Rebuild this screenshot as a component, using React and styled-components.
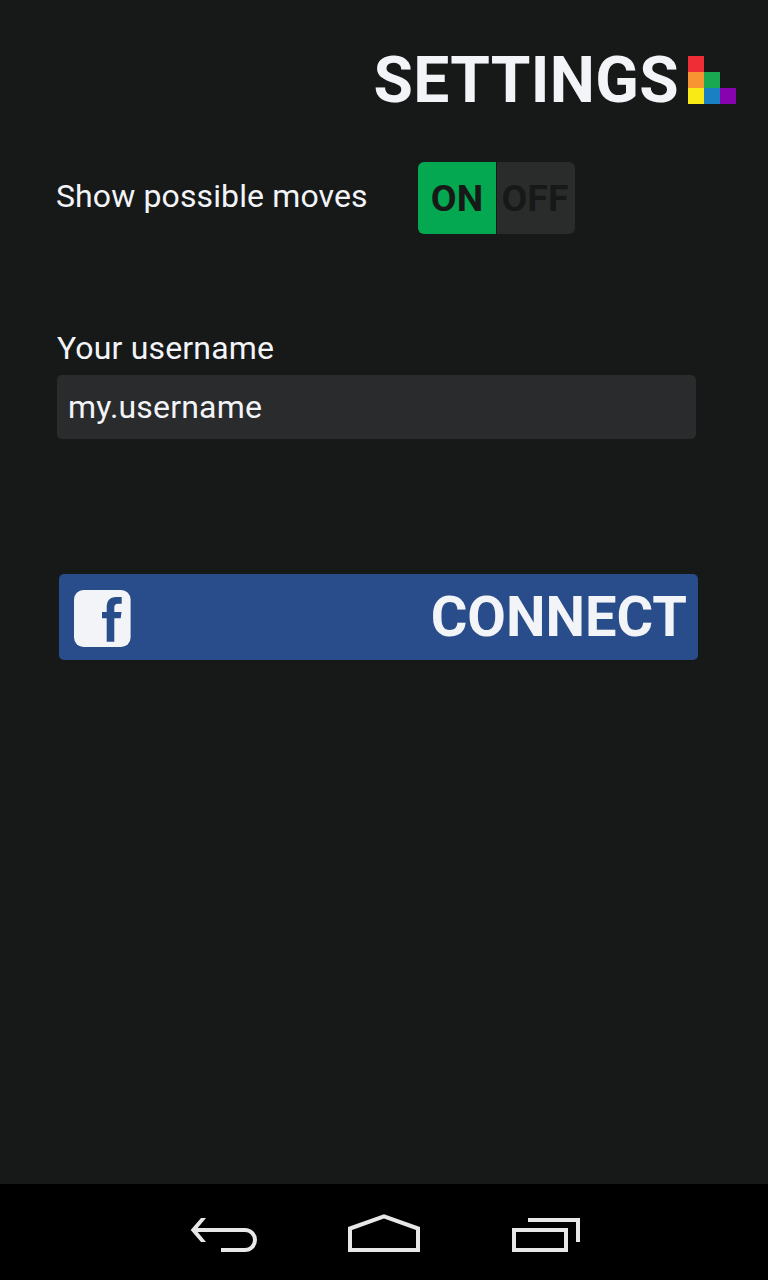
import React from 'react';
import styled, { createGlobalStyle } from 'styled-components';

const GlobalStyle = createGlobalStyle`
  * { box-sizing: border-box; }
  body { margin: 0; background: #171918; }
`;

const Screen = styled.div`
  width: 768px;
  height: 1280px;
  display: flex;
  flex-direction: column;
  background: #171918;
  color: #f3f4f8;
  font-family: Roboto, 'Liberation Sans', sans-serif;
  font-size: 32px;
`;

const Header = styled.header`
  display: flex;
  justify-content: flex-end;
  padding: 48px 32px 0 0;
  height: 162px;
`;

const Title = styled.h1`
  margin: 1px 0 0;
  font-size: 64px;
  line-height: 64px;
  font-weight: 700;
  letter-spacing: 0.35px;
  white-space: nowrap;
`;

const Logo = styled.div`
  display: grid;
  grid-template-columns: repeat(3, 16px);
  grid-template-rows: repeat(3, 16px);
  margin: 8px 0 0 9px;
  height: 48px;
`;

const Tile = styled.span`
  grid-column: ${(p) => p.$col};
  grid-row: ${(p) => p.$row};
  background: ${(p) => p.$color};
`;

const Main = styled.main`
  flex: 1;
  display: flex;
  flex-direction: column;
`;

const SettingRow = styled.div`
  display: flex;
  padding-left: 56px;
  height: 72px;
`;

const RowLabel = styled.span`
  width: 362px;
  padding-top: 18px;
  line-height: 32px;
  letter-spacing: 0.12px;
  white-space: nowrap;
`;

const Toggle = styled.div`
  display: flex;
  gap: 1px;
  border-radius: 6px;
  overflow: hidden;
`;

const ToggleOption = styled.button`
  width: 78px;
  height: 72px;
  padding: ${(p) => (p.$active ? '0' : '0 2px 0 0')};
  border: 0;
  display: flex;
  align-items: center;
  justify-content: center;
  background: ${(p) => (p.$active ? '#03a850' : '#2a2c2b')};
  color: #171918;
  font: 700 37.5px/72px Roboto, 'Liberation Sans', sans-serif;
`;

const Field = styled.label`
  display: flex;
  flex-direction: column;
  gap: 11px;
  margin: 98px 0 0 57px;
  width: 639px;
  line-height: 32px;
  letter-spacing: 0.17px;
`;

const Input = styled.input`
  height: 64px;
  width: 100%;
  padding: 0 11px;
  border: 0;
  border-radius: 5px;
  outline: 0;
  background: #2a2b2c;
  color: #f3f4f8;
  font: 400 32px/64px Roboto, 'Liberation Sans', sans-serif;
  letter-spacing: 0.18px;
`;

const ConnectButton = styled.button`
  display: flex;
  align-items: center;
  justify-content: space-between;
  width: 639px;
  height: 86px;
  margin: 135px 0 0 59px;
  padding: 0 11px 0 15px;
  border: 0;
  border-radius: 5px;
  background: #294d8a;
  color: #f3f4f8;
  font: 700 56px/86px Roboto, 'Liberation Sans', sans-serif;
`;

const FacebookIcon = styled.svg`
  display: block;
  margin-top: 3px;
`;

const NavBar = styled.nav`
  display: flex;
  justify-content: center;
  align-items: flex-start;
  gap: 84px;
  height: 96px;
  padding-top: 24px;
  background: #000;
`;

const NavIcon = styled.svg`
  display: block;
  width: 80px;
  height: 48px;
  fill: none;
  stroke: #e8e8e8;
  stroke-width: 4;
`;

const tiles = [
  { col: 1, row: 1, color: '#ee2d36' },
  { col: 1, row: 2, color: '#f99432' },
  { col: 2, row: 2, color: '#19a951' },
  { col: 1, row: 3, color: '#f9ea15' },
  { col: 2, row: 3, color: '#1880c3' },
  { col: 3, row: 3, color: '#8703b0' },
];

export default function App() {
  return (
    <Screen>
      <GlobalStyle />
      <Header>
        <Title>SETTINGS</Title>
        <Logo>
          {tiles.map((t) => (
            <Tile key={t.color} $col={t.col} $row={t.row} $color={t.color} />
          ))}
        </Logo>
      </Header>
      <Main>
        <SettingRow>
          <RowLabel>Show possible moves</RowLabel>
          <Toggle>
            <ToggleOption $active>ON</ToggleOption>
            <ToggleOption>OFF</ToggleOption>
          </Toggle>
        </SettingRow>
        <Field>
          Your username
          <Input defaultValue="my.username" />
        </Field>
        <ConnectButton>
          <FacebookIcon width="57" height="57" viewBox="0 0 57 57">
            <rect width="56.6" height="57" rx="9.5" fill="#f3f4f8" />
            <path
              d="M32.7 51.7V28.3H28V22H32.7V17.5C32.7 10.5 36 7 42 7H47.7V13.7H44C41.5 13.7 40.3 14.9 40.3 17.5V22H47.5L46.7 28.3H40.3V51.7Z"
              fill="#294d8a"
            />
          </FacebookIcon>
          CONNECT
        </ConnectButton>
      </Main>
      <NavBar>
        <NavIcon viewBox="180 1208 80 48">
          <path d="M194 1230H245A10 10 0 0 1 245 1250H221" />
          <path d="M206 1218H201L190.7 1230L201 1242H206L196 1230Z" fill="#e8e8e8" stroke="none" />
        </NavIcon>
        <NavIcon viewBox="344 1208 80 48">
          <path d="M350 1250V1228.5L384 1216.3L418 1228.5V1250Z" />
        </NavIcon>
        <NavIcon viewBox="508 1208 80 48">
          <path d="M514 1230H566V1250H514ZM528 1220H578V1242" />
        </NavIcon>
      </NavBar>
    </Screen>
  );
}
